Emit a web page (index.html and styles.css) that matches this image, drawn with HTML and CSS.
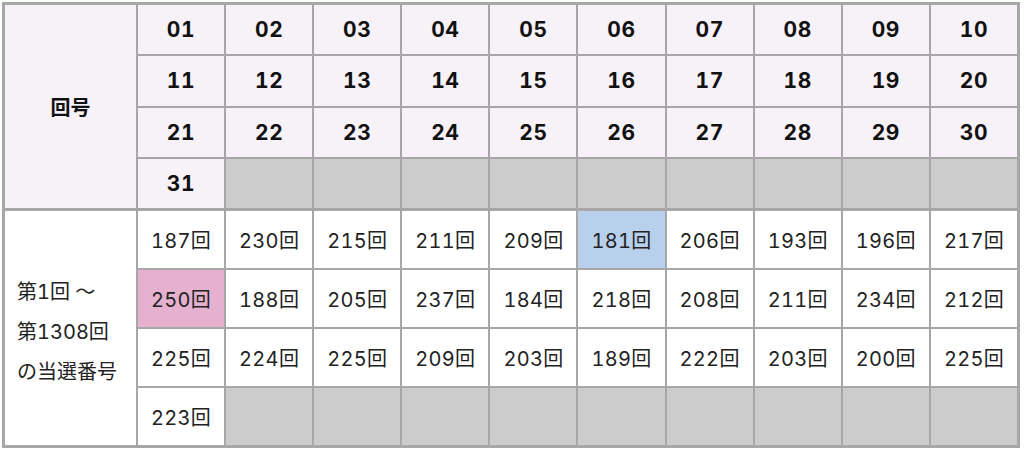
FILE: index.html
```html
<!DOCTYPE html>
<html lang="ja">
<head>
<meta charset="utf-8">
<title>回号別 当選回数</title>
<link rel="stylesheet" href="styles.css">
</head>
<body>
<div class="table">
  <div class="block head">
    <div class="label head-label">回号</div>
    <div class="cell hn">01</div><div class="cell hn">02</div><div class="cell hn">03</div><div class="cell hn">04</div><div class="cell hn">05</div><div class="cell hn">06</div><div class="cell hn">07</div><div class="cell hn">08</div><div class="cell hn">09</div><div class="cell hn">10</div>
    <div class="cell hn">11</div><div class="cell hn">12</div><div class="cell hn">13</div><div class="cell hn">14</div><div class="cell hn">15</div><div class="cell hn">16</div><div class="cell hn">17</div><div class="cell hn">18</div><div class="cell hn">19</div><div class="cell hn">20</div>
    <div class="cell hn">21</div><div class="cell hn">22</div><div class="cell hn">23</div><div class="cell hn">24</div><div class="cell hn">25</div><div class="cell hn">26</div><div class="cell hn">27</div><div class="cell hn">28</div><div class="cell hn">29</div><div class="cell hn">30</div>
    <div class="cell hn">31</div><div class="cell empty"></div><div class="cell empty"></div><div class="cell empty"></div><div class="cell empty"></div><div class="cell empty"></div><div class="cell empty"></div><div class="cell empty"></div><div class="cell empty"></div><div class="cell empty"></div>
  </div>
  <div class="block body">
    <div class="label body-label">第1回 ～<br>第1308回<br>の当選番号</div>
    <div class="cell">187回</div><div class="cell">230回</div><div class="cell">215回</div><div class="cell">211回</div><div class="cell">209回</div><div class="cell min">181回</div><div class="cell">206回</div><div class="cell">193回</div><div class="cell">196回</div><div class="cell">217回</div>
    <div class="cell max">250回</div><div class="cell">188回</div><div class="cell">205回</div><div class="cell">237回</div><div class="cell">184回</div><div class="cell">218回</div><div class="cell">208回</div><div class="cell">211回</div><div class="cell">234回</div><div class="cell">212回</div>
    <div class="cell">225回</div><div class="cell">224回</div><div class="cell">225回</div><div class="cell">209回</div><div class="cell">203回</div><div class="cell">189回</div><div class="cell">222回</div><div class="cell">203回</div><div class="cell">200回</div><div class="cell">225回</div>
    <div class="cell">223回</div><div class="cell empty"></div><div class="cell empty"></div><div class="cell empty"></div><div class="cell empty"></div><div class="cell empty"></div><div class="cell empty"></div><div class="cell empty"></div><div class="cell empty"></div><div class="cell empty"></div>
  </div>
</div>
</body>
</html>
```

FILE: styles.css
```css
html, body {
  margin: 0;
  padding: 0;
  background: #ffffff;
}

body {
  padding: 2px 0 0 2px;
  font-family: "Inter", "Noto Sans CJK JP", sans-serif;
  font-variant-numeric: tabular-nums;
  color: #222222;
}

.table {
  width: 1018px;
  box-sizing: border-box;
  background: #a7a7a7;
  padding: 3px;
  display: flex;
  flex-direction: column;
  gap: 3px;
}

.block {
  display: grid;
  grid-template-columns: 131px repeat(10, 1fr);
  gap: 2px;
}

.head {
  grid-template-rows: repeat(4, 49.25px);
}

.body {
  grid-template-rows: repeat(4, 57px);
}

.label {
  grid-row: 1 / span 4;
  display: flex;
  align-items: center;
}

.head-label {
  background: #f7f1f8;
  justify-content: center;
  font-family: "Noto Sans CJK JP", sans-serif;
  font-weight: bold;
  font-size: 20px;
  color: #111111;
}

.body-label {
  background: #ffffff;
  padding: 7px 0 0 12px;
  box-sizing: border-box;
  font-size: 20px;
  line-height: 40px;
}

.cell {
  display: flex;
  align-items: center;
  justify-content: center;
  background: #ffffff;
  font-size: 20px;
  letter-spacing: 0.3px;
}

.hn {
  background: #f7f1f8;
  font-weight: 700;
  font-size: 21px;
  letter-spacing: 0.6px;
  color: #111111;
}

.empty {
  background: #cccccc;
}

.min {
  background: #b8d0ec;
}

.max {
  background: #e5b1cf;
}
```
